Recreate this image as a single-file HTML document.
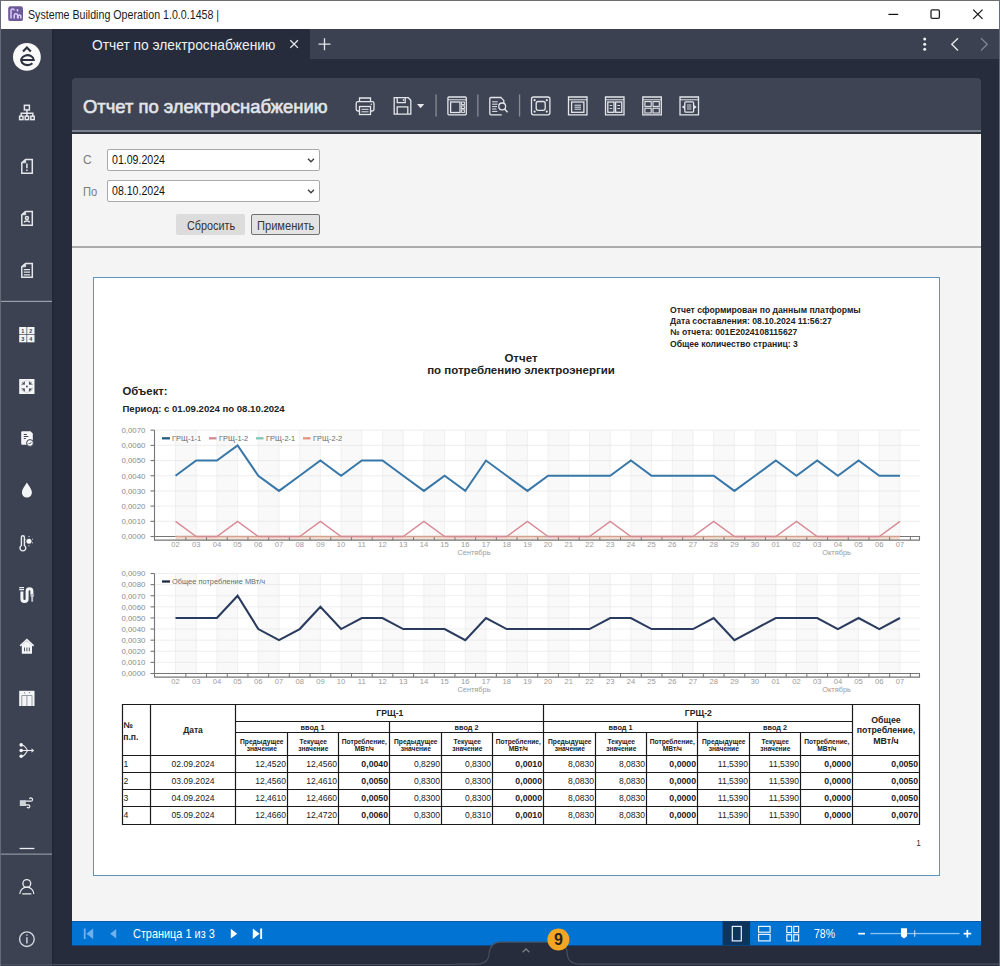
<!DOCTYPE html>
<html><head><meta charset="utf-8">
<style>
*{margin:0;padding:0;box-sizing:border-box}
html,body{width:1000px;height:966px;overflow:hidden;background:#262c3b;font-family:"Liberation Sans",sans-serif;position:relative}
.a{position:absolute;white-space:nowrap}
.sx{transform-origin:0 0}
#title{left:0;top:0;width:1000px;height:29px;background:#fff}
#side{left:1px;top:29px;width:51px;height:937px;background:#3c4252}
#tabs{left:310px;top:29px;width:689px;height:30px;background:#3b4150}
#tab{left:52px;top:29px;width:258px;height:30px;background:#262c3b}
#panel{left:72px;top:133.6px;width:909px;height:787px;background:#f4f4f4;border-right:1px solid #fff}
#tb{left:72px;top:78px;width:909px;height:52.2px;background:#3e4454;border-radius:4px 4px 0 0}
.inp{background:#fff;border:1px solid #a9a9a9;border-radius:2px;height:22px;width:213px}
#bar{left:72px;top:920.6px;width:909px;height:25.8px;background:#0073d3;border-top:0.6px solid #0a5aa8;border-bottom:0.6px solid #0a4a88}
svg{position:absolute;overflow:visible}
</style></head><body>
<div id="title" class="a"></div>
<div class="a" style="left:0;top:0;width:1000px;height:1px;background:#6e6e6e"></div>
<div class="a" style="left:0;top:0;width:1px;height:966px;background:#646a77"></div>
<div class="a" style="left:999px;top:0;width:1px;height:966px;background:#666b78"></div>
<svg style="left:0;top:0" width="30" height="29" viewBox="0 0 30 29">
  <rect x="8.2" y="6.3" width="14.8" height="14.8" rx="2.2" fill="#6d5b98"/>
  <path d="M11 18.5V10.5a1.6 1.6 0 0 1 3.2 0M17.5 11.5V9M14.2 18.5v-3a1.7 1.7 0 0 1 3.4 0v3M18.2 18.5v-2.5a1.4 1.4 0 0 1 2.6 0v2.5M11 18.5v-2.8" stroke="#d9ccff" stroke-width="1.5" fill="none"/>
</svg>
<div class="a sx" style="left:28px;top:8px;font-size:12px;color:#1c1c1c;transform:scaleX(0.888)">Systeme Building Operation 1.0.0.1458 |</div>
<svg style="left:880px;top:0" width="120" height="29" viewBox="880 0 120 29">
  <path d="M888.4 14.4h9.8" stroke="#111" stroke-width="1.2"/>
  <rect x="931" y="9.9" width="8.4" height="8.4" rx="1.3" stroke="#222" stroke-width="1.3" fill="none"/>
  <path d="M973.2 9.6l9.3 9.3M982.5 9.6l-9.3 9.3" stroke="#111" stroke-width="1.2"/>
</svg>

<div id="side" class="a"></div>
<div id="tab" class="a"></div>
<div class="a" style="left:52px;top:29px;width:2px;height:937px;background:#22273a"></div>
<div id="tabs" class="a"></div>
<div class="a sx" style="left:92px;top:37px;font-size:14px;color:#eef0f3;transform:scaleX(0.985)">Отчет по электроснабжению</div>
<svg style="left:280px;top:29px" width="60" height="30" viewBox="280 29 60 30">
  <path d="M290.3 40.3l7.6 7.6M297.9 40.3l-7.6 7.6" stroke="#e6e8ec" stroke-width="1.3"/>
  <path d="M324.5 38.2v12M318.5 44.2h12" stroke="#e6e8ec" stroke-width="1.3"/>
</svg>
<svg style="left:910px;top:29px" width="90" height="30" viewBox="910 29 90 30">
  <circle cx="924.7" cy="39" r="1.5" fill="#eef0f3"/><circle cx="924.7" cy="44.2" r="1.5" fill="#eef0f3"/><circle cx="924.7" cy="49.3" r="1.5" fill="#eef0f3"/>
  <path d="M958 38.2l-6.2 6.1 6.2 6.1" stroke="#e6e8ec" stroke-width="1.4" fill="none"/>
  <path d="M981 38.2l6.2 6.1-6.2 6.1" stroke="#7d8391" stroke-width="1.4" fill="none"/>
</svg>

<svg style="left:0;top:0" width="52" height="966" viewBox="0 0 52 966">
  <circle cx="26.9" cy="56.9" r="13.9" fill="#fafafa"/>
  <path d="M20.2 60H33.8A6.3 5 0 1 0 32.4 63.3" stroke="#2c313d" stroke-width="2.1" fill="none"/>
  <path d="M23 51.6L26.9 47.6 30.8 51.6" stroke="#2c313d" stroke-width="2.2" fill="none"/>
  <g stroke="#e4e6ea" fill="none" stroke-width="1.5">
    <!-- org chart -->
    <rect x="24.4" y="105.3" width="5" height="4.6" fill="#3c4252"/>
    <path d="M26.9 110v3.2M21.2 116v-2.8H32.8V116M26.9 113.2V116"/>
    <rect x="19.6" y="116.2" width="3.4" height="3.4"/><rect x="25.2" y="116.2" width="3.4" height="3.4"/><rect x="30.8" y="116.2" width="3.4" height="3.4"/>
    <!-- doc ! -->
    <path d="M21.8 162.8L25.6 159.4H32.3V173.3H21.8Z"/><path d="M21.8 162.8L25.6 159.4V162.8Z" fill="#e4e6ea" stroke-width="0.8"/>
    <path d="M26.9 163.6v4.6M26.9 169.6v1.4"/>
    <!-- doc person -->
    <path d="M21.8 214.8L25.6 211.4H32.3V225.3H21.8Z"/><path d="M21.8 214.8L25.6 211.4V214.8Z" fill="#e4e6ea" stroke-width="0.8"/>
    <circle cx="26.9" cy="218" r="1.5"/><path d="M24.4 222.6c0-2 5-2 5 0"/>
    <!-- doc lines -->
    <path d="M21.8 266.8L25.6 263.4H32.3V277.3H21.8Z"/><path d="M21.8 266.8L25.6 263.4V266.8Z" fill="#e4e6ea" stroke-width="0.8"/>
    <path d="M23.8 269.6h6.2M23.8 272.2h6.2M23.8 274.8h6.2" stroke-width="1.2"/>
  </g>
  <rect x="1" y="300.8" width="51" height="1.2" fill="#9aa0ac"/>
  <g fill="#f4f5f7">
    <!-- grid 1234 -->
    <rect x="19.2" y="327" width="7.3" height="7.3"/><rect x="27.2" y="327" width="7.3" height="7.3"/>
    <rect x="19.2" y="335" width="7.3" height="7.3"/><rect x="27.2" y="335" width="7.3" height="7.3"/>
    <text x="22.9" y="333.2" font-size="5.5" font-weight="bold" fill="#3c4252" text-anchor="middle">1</text>
    <text x="30.9" y="333.2" font-size="5.5" font-weight="bold" fill="#3c4252" text-anchor="middle">2</text>
    <text x="22.9" y="341.2" font-size="5.5" font-weight="bold" fill="#3c4252" text-anchor="middle">3</text>
    <text x="30.9" y="341.2" font-size="5.5" font-weight="bold" fill="#3c4252" text-anchor="middle">4</text>
    <!-- fan -->
    <rect x="19.2" y="379" width="15.3" height="15" />
    <circle cx="26.9" cy="386.5" r="5.9" fill="#3c4252"/>
    <circle cx="26.9" cy="386.5" r="5.5" fill="none" stroke="#f4f5f7" stroke-width="0.7"/>
    <ellipse cx="26.9" cy="383.4" rx="2.1" ry="3.1" /><ellipse cx="26.9" cy="389.6" rx="2.1" ry="3.1"/>
    <ellipse cx="23.8" cy="386.5" rx="3.1" ry="2.1" /><ellipse cx="30" cy="386.5" rx="3.1" ry="2.1"/>
    <circle cx="26.9" cy="386.5" r="0.9" fill="#3c4252"/>
    <!-- doc check -->
    <path d="M22.2 431.2H30.5L32.8 433.5V444.8H22.2A1 1 0 0 1 21.2 443.8V432.2A1 1 0 0 1 22.2 431.2Z"/>
    <path d="M23.8 434.5h3M23.8 436.5h4.5M23.8 438.5h2" stroke="#3c4252" stroke-width="1"/>
    <circle cx="30" cy="443" r="3.4" stroke="#3c4252" stroke-width="1"/>
    <path d="M28.6 443l1 1 1.8-1.8" stroke="#3c4252" stroke-width="0.9" fill="none"/>
    <!-- drop -->
    <path d="M26.9 482.6C25 486 21.9 489.5 21.9 492.6A5 5 0 0 0 31.9 492.6C31.9 489.5 28.8 486 26.9 482.6Z"/>
    <!-- house -->
    <path d="M20.2 645.8L26.9 639.5 33.6 645.8" stroke="#f4f5f7" stroke-width="1.6" fill="none"/>
    <path d="M21.8 645.2L26.9 640.8 32 645.2V653.8H21.8Z"/>
    <path d="M24.5 647.5v3.8M26.9 647.5v3.8M29.3 647.5v3.8" stroke="#3c4252" stroke-width="0.9"/>
    <!-- elevator -->
    <rect x="19.2" y="690.8" width="15.3" height="15.2"/>
    <path d="M21.8 706V695.5H32V706M26.9 695.5V706" stroke="#8e929a" stroke-width="0.9" fill="none"/>
    <path d="M23.8 693.2l0.8-1 0.8 1ZM28.8 692.2l0.8 1 0.8-1Z" fill="#3c4252"/>
  </g>
  <g stroke="#eceef1" fill="none" stroke-width="1.4">
    <!-- thermometer sun -->
    <path d="M21.4 545.5V537.2A1.5 1.5 0 0 1 24.4 537.2V545.5A2.9 2.9 0 1 1 21.4 545.5Z"/>
    <circle cx="29" cy="541.2" r="2.5" fill="#f4f5f7" stroke="none"/>
    <path d="M29 536.2v1M29 545.3v1M25.5 539.5l.8.5M32 542.5l.8.5M32 539.5l.8-.5M25.7 542.5l.6-.4" stroke-width="1"/>
    <!-- pipe -->
    <path d="M19.2 587.6h4.8M19.2 589.6h4.8" stroke-width="1.2"/>
    <path d="M21.9 591.4V599A2.6 2.6 0 0 0 27.1 599V591.2A2.4 2.4 0 0 1 31.9 591.2V594.6" stroke-width="3" stroke="#f4f5f7"/>
    <path d="M30 594.6h4.4l-1.3 2.8v4.4h-1.8v-4.4z" fill="#c4c8d0" stroke="none"/>
    <!-- split -->
    <circle cx="21.2" cy="744.9" r="1.8" fill="#f4f5f7" stroke="none"/>
    <circle cx="21.2" cy="750.5" r="1.8" fill="#f4f5f7" stroke="none"/>
    <circle cx="21.2" cy="756.3" r="1.8" fill="#f4f5f7" stroke="none"/>
    <path d="M22 745C25 745.5 26.5 748.5 27.5 750.5 26.5 752.5 25 755.5 22 756.3M22 750.5H32" stroke-width="1.1"/>
    <path d="M31.5 748.2L34.3 750.5 31.5 752.8Z" fill="#dfe1e5" stroke="none"/>
    <!-- wind -->
    <rect x="19.8" y="800.2" width="6" height="5.8" fill="#cfd3da" stroke="none"/>
    <path d="M25.5 801.2H31A1.6 1.6 0 1 0 29.5 799M25 804.8H28.5A1.5 1.5 0 1 1 27 807" stroke-width="1.2"/>
    <path d="M19.6 848.5H34.4" stroke-width="1.3"/>
    <!-- user -->
    <circle cx="26.8" cy="883.5" r="3.9" stroke-width="1.3"/>
    <path d="M19.9 894A6.9 6.9 0 0 1 33.7 894M22.2 893.8H31.4" stroke-width="1.3"/>
    <!-- info -->
    <circle cx="26.9" cy="939.2" r="7.3" stroke="#d4d8e0" stroke-width="1.4"/>
    <path d="M26.9 937.2V943.6M26.9 934.6V935.8" stroke="#d4d8e0" stroke-width="1.4"/>
  </g>
  <rect x="1" y="853.5" width="51" height="1.3" fill="#8a909c"/>
</svg>
<div id="panel" class="a"></div>
<div id="tb" class="a"></div>
<div class="a sx" style="left:83px;top:96px;font-size:18.4px;color:#e2e5ea;letter-spacing:0px;-webkit-text-stroke:0.6px #e2e5ea">Отчет по электроснабжению</div>
<svg style="left:340px;top:85px" width="370" height="40" viewBox="340 85 370 40">
 <g stroke="#e4e6ea" stroke-width="1.3" fill="none">
  <path d="M359.5 101.5V98H370.5V101.5"/>
  <rect x="356.2" y="101.6" width="17.8" height="9.4" rx="1.8"/>
  <rect x="359.5" y="106.5" width="11" height="8" fill="#3e4454"/>
  <path d="M361.5 109.3h7M361.5 111.8h7" stroke-width="1"/>
  <path d="M394.2 97.7H408.3L410.8 100.2V114.2H394.2Z"/>
  <path d="M397.2 97.9V102.6H405.2V97.9"/>
  <path d="M397.2 114V106.8H407.8V114"/>
  <path d="M403.4 99v2" stroke-width="1"/>
  <rect x="447.9" y="97" width="18.4" height="17.8" rx="1"/>
  <path d="M448 99.8H466.2" stroke-width="1"/>
  <rect x="450.6" y="102" width="9.4" height="10.5"/>
  <rect x="461.6" y="102" width="2.8" height="2.6" stroke-width="1"/>
  <rect x="461.6" y="105.9" width="2.8" height="2.6" stroke-width="1"/>
  <rect x="461.6" y="109.8" width="2.8" height="2.6" stroke-width="1"/>
  <path d="M501.5 97.5H490.8A1 1 0 0 0 489.8 98.5V113.8A1 1 0 0 0 490.8 114.8H501.8"/>
  <path d="M501 97.6L503.8 100.4V103"/>
  <path d="M492.2 101.8h5.5M492.2 104.2h5.5M492.2 106.6h4.8M492.2 109h4.2M492.2 111.4h5.2" stroke-width="1"/>
  <circle cx="502.2" cy="106.4" r="3.4"/>
  <path d="M504.6 109l3 3.2" stroke-width="1.5"/>
  <rect x="531.5" y="97" width="18.4" height="17.8" rx="2"/>
  <rect x="536.2" y="101.5" width="9" height="8.8" rx="2"/>
  <path d="M568.5 97H587V114.8H568.5Z"/><path d="M568.5 99.8H587" stroke-width="1"/>
  <rect x="571.6" y="102" width="12.3" height="10.3"/>
  <path d="M574.5 105.2h6.5M574.5 107.2h6.5M574.5 109.2h6.5" stroke-width="1"/>
  <path d="M605.5 97H624V114.8H605.5Z"/><path d="M605.5 99.8H624" stroke-width="1"/>
  <rect x="607.8" y="102" width="6.2" height="10.3"/><rect x="615.6" y="102" width="6.2" height="10.3"/>
  <path d="M609.6 105.5h2.6M609.6 108.5h2.6M617.4 105.5h2.6M617.4 108.5h2.6" stroke-width="0.9"/>
  <path d="M642.8 97H661.3V114.8H642.8Z"/><path d="M642.8 99.8H661.3" stroke-width="1"/>
  <rect x="644.9" y="101.6" width="6.3" height="4.8" stroke-width="1.1"/><rect x="653" y="101.6" width="6.3" height="4.8" stroke-width="1.1"/>
  <rect x="644.9" y="108.2" width="6.3" height="4.8" stroke-width="1.1"/><rect x="653" y="108.2" width="6.3" height="4.8" stroke-width="1.1"/>
  <path d="M680 97H698.5V114.8H680Z"/><path d="M680 99.8H698.5" stroke-width="1"/>
  <rect x="684.8" y="101.8" width="8.8" height="10.4" rx="1"/>
  <path d="M687 105h4.4M687 107h4.4M687 109h4.4" stroke-width="0.9"/>
 </g>
 <g fill="#e4e6ea">
  <path d="M417 104H424.2L420.6 108.2Z"/>
  <rect x="435.4" y="94.5" width="1.3" height="22" fill="#868c96"/>
  <rect x="477.2" y="94.5" width="1.3" height="22" fill="#868c96"/>
  <rect x="518.9" y="94.5" width="1.3" height="22" fill="#868c96"/>
  <circle cx="371.3" cy="104.2" r="0.8"/>
  <circle cx="534.6" cy="100.2" r="1.1"/><circle cx="546.8" cy="100.2" r="1.1"/>
  <circle cx="534.6" cy="111.6" r="1.1"/><circle cx="546.8" cy="111.6" r="1.1"/>
  <path d="M681.8 107L684.5 105V109ZM696.7 107L694 105V109Z"/>
 </g>
</svg>

<div class="a" style="left:72px;top:130.2px;width:909px;height:1.4px;background:#7b818d"></div><div class="a" style="left:72px;top:131.6px;width:909px;height:2px;background:#2f3441"></div>
<div class="a" style="left:83px;top:153px;font-size:12px;color:#7c7c7c">С</div>
<div class="a sx" style="left:83px;top:185px;font-size:12px;color:#7c7c7c;transform:scaleX(0.93)">По</div>
<div class="a inp" style="left:107px;top:149px;height:21.5px"></div>
<div class="a inp" style="left:107px;top:180.4px;height:21.7px"></div>
<div class="a sx" style="left:111.5px;top:152.5px;font-size:12.3px;color:#111;transform:scaleX(0.86)">01.09.2024</div>
<div class="a sx" style="left:111.5px;top:184px;font-size:12.3px;color:#111;transform:scaleX(0.86)">08.10.2024</div>
<svg style="left:300px;top:150px" width="20" height="60" viewBox="300 150 20 60">
  <path d="M308 158.8l3 3 3-3M308 189.8l3 3 3-3" stroke="#3a3a3a" stroke-width="1.3" fill="none"/>
</svg>
<div class="a" style="left:175.5px;top:213.8px;width:69.3px;height:21px;background:#dcdcdc;border-radius:2px"></div>
<div class="a" style="left:251.2px;top:214px;width:68.5px;height:20.5px;background:#e3e3e3;border:1.7px solid #727272;border-radius:2px"></div>
<div class="a sx" style="left:187px;top:218.5px;font-size:12px;color:#333;transform:scaleX(0.9)">Сбросить</div>
<div class="a sx" style="left:256.6px;top:218.5px;font-size:12px;color:#333;transform:scaleX(0.925)">Применить</div>
<div class="a" style="left:72px;top:245.5px;width:909px;height:2.5px;background:#ababab"></div>

<div id="bar" class="a"></div>
<svg style="left:72px;top:920px" width="910" height="27" viewBox="72 920 910 27">
  <g fill="#6fb0ee">
    <rect x="83.8" y="928.5" width="1.8" height="10.5"/>
    <path d="M93.2 928.5V939L86.4 933.7Z"/>
    <path d="M116.2 929V938.5L110.2 933.7Z"/>
  </g>
  <g fill="#ffffff">
    <path d="M230.8 928.8V938.6L237.2 933.7Z"/>
    <path d="M252.8 928.5V939L259.6 933.7Z"/>
    <rect x="260.2" y="928.5" width="1.9" height="10.5"/>
  </g>
  <rect x="722.6" y="921.2" width="27.5" height="24" fill="#0e3460"/>
  <g stroke="#e8f2fc" stroke-width="1.2" fill="none">
    <rect x="732.3" y="926.4" width="9" height="14.5"/>
    <rect x="758.6" y="926.4" width="11.5" height="5.8"/><rect x="758.6" y="934.4" width="11.5" height="6.5"/>
    <rect x="786.8" y="926.4" width="4.8" height="6.2"/><rect x="793.8" y="926.4" width="4.8" height="6.2"/>
    <rect x="786.8" y="934.7" width="4.8" height="6.2"/><rect x="793.8" y="934.7" width="4.8" height="6.2"/>
  </g>
  <g fill="#ffffff">
    <rect x="858.2" y="932.8" width="6.8" height="1.7"/>
    <rect x="963.6" y="932.8" width="7.6" height="1.7"/><rect x="966.5" y="929.9" width="1.7" height="7.6"/>
  </g>
  <rect x="870.4" y="932.9" width="89.2" height="1.3" fill="#8cc4f2"/>
  <rect x="914.2" y="930.3" width="1" height="6.5" fill="#cfe6fa"/>
  <path d="M901 928.2H907V936.2L904 938.4 901 936.2Z" fill="#ffffff"/>
</svg>
<div class="a sx" style="left:133px;top:927px;font-size:12.2px;color:#fff;transform:scaleX(0.895)">Страница 1 из 3</div>
<div class="a sx" style="left:813.6px;top:927px;font-size:12.2px;color:#fff;transform:scaleX(0.86)">78%</div>
<svg style="left:460px;top:925px" width="130" height="41" viewBox="460 925 130 41">
  <path d="M455 964.2H476Q488.5 964.2 489.2 953.5Q490 942.2 501 942.2H558Q566.5 942.2 567.2 953.5Q568 964.2 580 964.2H999" stroke="#46505f" stroke-width="1.2" fill="#262c3b"/>
  <path d="M522.6 952.2l3.4-3.2 3.4 3.2" stroke="#7a808b" stroke-width="1.3" fill="none"/>
  <circle cx="558.4" cy="939.5" r="11" fill="#f3a623"/>
  <text x="558.5" y="944.9" font-size="16" font-weight="bold" fill="#2a2320" text-anchor="middle" font-family="Liberation Sans">9</text>
</svg>
<div class="a" style="left:1px;top:964px;width:454px;height:1.2px;background:#46505f"></div>
<div class="a" style="left:93px;top:276.5px;width:847px;height:599.5px;background:#fff;border:1.3px solid #6193bd"></div>
<div class="a" style="left:670px;top:305.20px;font-size:8.65px;font-weight:bold;color:#222">Отчет сформирован по данным платформы</div>
<div class="a" style="left:670px;top:316.10px;font-size:8.65px;font-weight:bold;color:#222">Дата составления: 08.10.2024 11:56:27</div>
<div class="a" style="left:670px;top:327.00px;font-size:8.65px;font-weight:bold;color:#222">№ отчета: 001E2024108115627</div>
<div class="a" style="left:670px;top:338.60px;font-size:8.65px;font-weight:bold;color:#222">Общее количество страниц: 3</div>
<div class="a" style="left:321px;width:400px;text-align:center;top:353.4px;font-size:11.5px;font-weight:bold;color:#222;line-height:11.5px">Отчет<br>по потреблению электроэнергии</div>
<div class="a" style="left:122.5px;top:384.5px;font-size:11.3px;font-weight:bold;color:#222">Объект:</div>
<div class="a" style="left:122.5px;top:403px;font-size:9.57px;font-weight:bold;color:#222">Период: с 01.09.2024 по 08.10.2024</div>
<svg style="left:0;top:0" width="1000" height="966" viewBox="0 0 1000 966" font-family="Liberation Sans"><rect x="175.50" y="430.30" width="20.70" height="106.20" fill="#f9f9f9"/>
<rect x="216.90" y="430.30" width="20.70" height="106.20" fill="#f9f9f9"/>
<rect x="258.30" y="430.30" width="20.70" height="106.20" fill="#f9f9f9"/>
<rect x="299.70" y="430.30" width="20.70" height="106.20" fill="#f9f9f9"/>
<rect x="341.10" y="430.30" width="20.70" height="106.20" fill="#f9f9f9"/>
<rect x="382.50" y="430.30" width="20.70" height="106.20" fill="#f9f9f9"/>
<rect x="423.90" y="430.30" width="20.70" height="106.20" fill="#f9f9f9"/>
<rect x="465.30" y="430.30" width="20.70" height="106.20" fill="#f9f9f9"/>
<rect x="506.70" y="430.30" width="20.70" height="106.20" fill="#f9f9f9"/>
<rect x="548.10" y="430.30" width="20.70" height="106.20" fill="#f9f9f9"/>
<rect x="589.50" y="430.30" width="20.70" height="106.20" fill="#f9f9f9"/>
<rect x="630.90" y="430.30" width="20.70" height="106.20" fill="#f9f9f9"/>
<rect x="672.30" y="430.30" width="20.70" height="106.20" fill="#f9f9f9"/>
<rect x="713.70" y="430.30" width="20.70" height="106.20" fill="#f9f9f9"/>
<rect x="755.10" y="430.30" width="20.70" height="106.20" fill="#f9f9f9"/>
<rect x="796.50" y="430.30" width="20.70" height="106.20" fill="#f9f9f9"/>
<rect x="837.90" y="430.30" width="20.70" height="106.20" fill="#f9f9f9"/>
<rect x="879.30" y="430.30" width="20.70" height="106.20" fill="#f9f9f9"/>
<path d="M154.5 536.50H919.5" stroke="#d9d9d9" stroke-width="0.9" stroke-dasharray="1 1"/>
<path d="M150.5 536.50H154.5" stroke="#777" stroke-width="1.1"/>
<text x="145.4" y="539.30" font-size="7.8" fill="#8a8a8a" text-anchor="end">0,0000</text>
<path d="M154.5 521.31H919.5" stroke="#d9d9d9" stroke-width="0.9" stroke-dasharray="1 1"/>
<path d="M150.5 521.31H154.5" stroke="#777" stroke-width="1.1"/>
<text x="145.4" y="524.11" font-size="7.8" fill="#8a8a8a" text-anchor="end">0,0010</text>
<path d="M154.5 506.12H919.5" stroke="#d9d9d9" stroke-width="0.9" stroke-dasharray="1 1"/>
<path d="M150.5 506.12H154.5" stroke="#777" stroke-width="1.1"/>
<text x="145.4" y="508.92" font-size="7.8" fill="#8a8a8a" text-anchor="end">0,0020</text>
<path d="M154.5 490.93H919.5" stroke="#d9d9d9" stroke-width="0.9" stroke-dasharray="1 1"/>
<path d="M150.5 490.93H154.5" stroke="#777" stroke-width="1.1"/>
<text x="145.4" y="493.73" font-size="7.8" fill="#8a8a8a" text-anchor="end">0,0030</text>
<path d="M154.5 475.74H919.5" stroke="#d9d9d9" stroke-width="0.9" stroke-dasharray="1 1"/>
<path d="M150.5 475.74H154.5" stroke="#777" stroke-width="1.1"/>
<text x="145.4" y="478.54" font-size="7.8" fill="#8a8a8a" text-anchor="end">0,0040</text>
<path d="M154.5 460.55H919.5" stroke="#d9d9d9" stroke-width="0.9" stroke-dasharray="1 1"/>
<path d="M150.5 460.55H154.5" stroke="#777" stroke-width="1.1"/>
<text x="145.4" y="463.35" font-size="7.8" fill="#8a8a8a" text-anchor="end">0,0050</text>
<path d="M154.5 445.36H919.5" stroke="#d9d9d9" stroke-width="0.9" stroke-dasharray="1 1"/>
<path d="M150.5 445.36H154.5" stroke="#777" stroke-width="1.1"/>
<text x="145.4" y="448.16" font-size="7.8" fill="#8a8a8a" text-anchor="end">0,0060</text>
<path d="M154.5 430.17H919.5" stroke="#d9d9d9" stroke-width="0.9" stroke-dasharray="1 1"/>
<path d="M150.5 430.17H154.5" stroke="#777" stroke-width="1.1"/>
<text x="145.4" y="432.97" font-size="7.8" fill="#8a8a8a" text-anchor="end">0,0070</text>
<path d="M175.50 430.30V536.50" stroke="#ececec" stroke-width="0.8"/>
<path d="M196.20 430.30V536.50" stroke="#ececec" stroke-width="0.8"/>
<path d="M216.90 430.30V536.50" stroke="#ececec" stroke-width="0.8"/>
<path d="M237.60 430.30V536.50" stroke="#ececec" stroke-width="0.8"/>
<path d="M258.30 430.30V536.50" stroke="#ececec" stroke-width="0.8"/>
<path d="M279.00 430.30V536.50" stroke="#ececec" stroke-width="0.8"/>
<path d="M299.70 430.30V536.50" stroke="#ececec" stroke-width="0.8"/>
<path d="M320.40 430.30V536.50" stroke="#ececec" stroke-width="0.8"/>
<path d="M341.10 430.30V536.50" stroke="#ececec" stroke-width="0.8"/>
<path d="M361.80 430.30V536.50" stroke="#ececec" stroke-width="0.8"/>
<path d="M382.50 430.30V536.50" stroke="#ececec" stroke-width="0.8"/>
<path d="M403.20 430.30V536.50" stroke="#ececec" stroke-width="0.8"/>
<path d="M423.90 430.30V536.50" stroke="#ececec" stroke-width="0.8"/>
<path d="M444.60 430.30V536.50" stroke="#ececec" stroke-width="0.8"/>
<path d="M465.30 430.30V536.50" stroke="#ececec" stroke-width="0.8"/>
<path d="M486.00 430.30V536.50" stroke="#ececec" stroke-width="0.8"/>
<path d="M506.70 430.30V536.50" stroke="#ececec" stroke-width="0.8"/>
<path d="M527.40 430.30V536.50" stroke="#ececec" stroke-width="0.8"/>
<path d="M548.10 430.30V536.50" stroke="#ececec" stroke-width="0.8"/>
<path d="M568.80 430.30V536.50" stroke="#ececec" stroke-width="0.8"/>
<path d="M589.50 430.30V536.50" stroke="#ececec" stroke-width="0.8"/>
<path d="M610.20 430.30V536.50" stroke="#ececec" stroke-width="0.8"/>
<path d="M630.90 430.30V536.50" stroke="#ececec" stroke-width="0.8"/>
<path d="M651.60 430.30V536.50" stroke="#ececec" stroke-width="0.8"/>
<path d="M672.30 430.30V536.50" stroke="#ececec" stroke-width="0.8"/>
<path d="M693.00 430.30V536.50" stroke="#ececec" stroke-width="0.8"/>
<path d="M713.70 430.30V536.50" stroke="#ececec" stroke-width="0.8"/>
<path d="M734.40 430.30V536.50" stroke="#ececec" stroke-width="0.8"/>
<path d="M755.10 430.30V536.50" stroke="#ececec" stroke-width="0.8"/>
<path d="M775.80 430.30V536.50" stroke="#ececec" stroke-width="0.8"/>
<path d="M796.50 430.30V536.50" stroke="#ececec" stroke-width="0.8"/>
<path d="M817.20 430.30V536.50" stroke="#ececec" stroke-width="0.8"/>
<path d="M837.90 430.30V536.50" stroke="#ececec" stroke-width="0.8"/>
<path d="M858.60 430.30V536.50" stroke="#ececec" stroke-width="0.8"/>
<path d="M879.30 430.30V536.50" stroke="#ececec" stroke-width="0.8"/>
<path d="M900.00 430.30V536.50" stroke="#ececec" stroke-width="0.8"/>
<rect x="175.50" y="536.50" width="724.50" height="3.6" fill="#f2e0d6"/>
<path d="M154.5 430.30V540.10H919.5V536.50H154.5" stroke="#767676" stroke-width="1.1" fill="none"/>
<path d="M185.85 536.50V540.10" stroke="#767676" stroke-width="1"/>
<text x="175.50" y="547.20" font-size="7.6" fill="#9a9a9a" text-anchor="middle">02</text>
<path d="M206.55 536.50V540.10" stroke="#767676" stroke-width="1"/>
<text x="196.20" y="547.20" font-size="7.6" fill="#9a9a9a" text-anchor="middle">03</text>
<path d="M227.25 536.50V540.10" stroke="#767676" stroke-width="1"/>
<text x="216.90" y="547.20" font-size="7.6" fill="#9a9a9a" text-anchor="middle">04</text>
<path d="M247.95 536.50V540.10" stroke="#767676" stroke-width="1"/>
<text x="237.60" y="547.20" font-size="7.6" fill="#9a9a9a" text-anchor="middle">05</text>
<path d="M268.65 536.50V540.10" stroke="#767676" stroke-width="1"/>
<text x="258.30" y="547.20" font-size="7.6" fill="#9a9a9a" text-anchor="middle">06</text>
<path d="M289.35 536.50V540.10" stroke="#767676" stroke-width="1"/>
<text x="279.00" y="547.20" font-size="7.6" fill="#9a9a9a" text-anchor="middle">07</text>
<path d="M310.05 536.50V540.10" stroke="#767676" stroke-width="1"/>
<text x="299.70" y="547.20" font-size="7.6" fill="#9a9a9a" text-anchor="middle">08</text>
<path d="M330.75 536.50V540.10" stroke="#767676" stroke-width="1"/>
<text x="320.40" y="547.20" font-size="7.6" fill="#9a9a9a" text-anchor="middle">09</text>
<path d="M351.45 536.50V540.10" stroke="#767676" stroke-width="1"/>
<text x="341.10" y="547.20" font-size="7.6" fill="#9a9a9a" text-anchor="middle">10</text>
<path d="M372.15 536.50V540.10" stroke="#767676" stroke-width="1"/>
<text x="361.80" y="547.20" font-size="7.6" fill="#9a9a9a" text-anchor="middle">11</text>
<path d="M392.85 536.50V540.10" stroke="#767676" stroke-width="1"/>
<text x="382.50" y="547.20" font-size="7.6" fill="#9a9a9a" text-anchor="middle">12</text>
<path d="M413.55 536.50V540.10" stroke="#767676" stroke-width="1"/>
<text x="403.20" y="547.20" font-size="7.6" fill="#9a9a9a" text-anchor="middle">13</text>
<path d="M434.25 536.50V540.10" stroke="#767676" stroke-width="1"/>
<text x="423.90" y="547.20" font-size="7.6" fill="#9a9a9a" text-anchor="middle">14</text>
<path d="M454.95 536.50V540.10" stroke="#767676" stroke-width="1"/>
<text x="444.60" y="547.20" font-size="7.6" fill="#9a9a9a" text-anchor="middle">15</text>
<path d="M475.65 536.50V540.10" stroke="#767676" stroke-width="1"/>
<text x="465.30" y="547.20" font-size="7.6" fill="#9a9a9a" text-anchor="middle">16</text>
<path d="M496.35 536.50V540.10" stroke="#767676" stroke-width="1"/>
<text x="486.00" y="547.20" font-size="7.6" fill="#9a9a9a" text-anchor="middle">17</text>
<path d="M517.05 536.50V540.10" stroke="#767676" stroke-width="1"/>
<text x="506.70" y="547.20" font-size="7.6" fill="#9a9a9a" text-anchor="middle">18</text>
<path d="M537.75 536.50V540.10" stroke="#767676" stroke-width="1"/>
<text x="527.40" y="547.20" font-size="7.6" fill="#9a9a9a" text-anchor="middle">19</text>
<path d="M558.45 536.50V540.10" stroke="#767676" stroke-width="1"/>
<text x="548.10" y="547.20" font-size="7.6" fill="#9a9a9a" text-anchor="middle">20</text>
<path d="M579.15 536.50V540.10" stroke="#767676" stroke-width="1"/>
<text x="568.80" y="547.20" font-size="7.6" fill="#9a9a9a" text-anchor="middle">21</text>
<path d="M599.85 536.50V540.10" stroke="#767676" stroke-width="1"/>
<text x="589.50" y="547.20" font-size="7.6" fill="#9a9a9a" text-anchor="middle">22</text>
<path d="M620.55 536.50V540.10" stroke="#767676" stroke-width="1"/>
<text x="610.20" y="547.20" font-size="7.6" fill="#9a9a9a" text-anchor="middle">23</text>
<path d="M641.25 536.50V540.10" stroke="#767676" stroke-width="1"/>
<text x="630.90" y="547.20" font-size="7.6" fill="#9a9a9a" text-anchor="middle">24</text>
<path d="M661.95 536.50V540.10" stroke="#767676" stroke-width="1"/>
<text x="651.60" y="547.20" font-size="7.6" fill="#9a9a9a" text-anchor="middle">25</text>
<path d="M682.65 536.50V540.10" stroke="#767676" stroke-width="1"/>
<text x="672.30" y="547.20" font-size="7.6" fill="#9a9a9a" text-anchor="middle">26</text>
<path d="M703.35 536.50V540.10" stroke="#767676" stroke-width="1"/>
<text x="693.00" y="547.20" font-size="7.6" fill="#9a9a9a" text-anchor="middle">27</text>
<path d="M724.05 536.50V540.10" stroke="#767676" stroke-width="1"/>
<text x="713.70" y="547.20" font-size="7.6" fill="#9a9a9a" text-anchor="middle">28</text>
<path d="M744.75 536.50V540.10" stroke="#767676" stroke-width="1"/>
<text x="734.40" y="547.20" font-size="7.6" fill="#9a9a9a" text-anchor="middle">29</text>
<path d="M765.45 536.50V540.10" stroke="#767676" stroke-width="1"/>
<text x="755.10" y="547.20" font-size="7.6" fill="#9a9a9a" text-anchor="middle">30</text>
<path d="M786.15 536.50V540.10" stroke="#767676" stroke-width="1"/>
<text x="775.80" y="547.20" font-size="7.6" fill="#9a9a9a" text-anchor="middle">01</text>
<path d="M806.85 536.50V540.10" stroke="#767676" stroke-width="1"/>
<text x="796.50" y="547.20" font-size="7.6" fill="#9a9a9a" text-anchor="middle">02</text>
<path d="M827.55 536.50V540.10" stroke="#767676" stroke-width="1"/>
<text x="817.20" y="547.20" font-size="7.6" fill="#9a9a9a" text-anchor="middle">03</text>
<path d="M848.25 536.50V540.10" stroke="#767676" stroke-width="1"/>
<text x="837.90" y="547.20" font-size="7.6" fill="#9a9a9a" text-anchor="middle">04</text>
<path d="M868.95 536.50V540.10" stroke="#767676" stroke-width="1"/>
<text x="858.60" y="547.20" font-size="7.6" fill="#9a9a9a" text-anchor="middle">05</text>
<path d="M889.65 536.50V540.10" stroke="#767676" stroke-width="1"/>
<text x="879.30" y="547.20" font-size="7.6" fill="#9a9a9a" text-anchor="middle">06</text>
<path d="M910.35 536.50V540.10" stroke="#767676" stroke-width="1"/>
<text x="900.00" y="547.20" font-size="7.6" fill="#9a9a9a" text-anchor="middle">07</text>
<text x="474" y="555.00" font-size="7.4" fill="#9a9a9a" text-anchor="middle">Сентябрь</text>
<text x="836.6" y="555.00" font-size="7.4" fill="#9a9a9a" text-anchor="middle">Октябрь</text>
<polyline points="175.50,536.50 196.20,536.50 216.90,536.50 237.60,536.50 258.30,536.50 279.00,536.50 299.70,536.50 320.40,536.50 341.10,536.50 361.80,536.50 382.50,536.50 403.20,536.50 423.90,536.50 444.60,536.50 465.30,536.50 486.00,536.50 506.70,536.50 527.40,536.50 548.10,536.50 568.80,536.50 589.50,536.50 610.20,536.50 630.90,536.50 651.60,536.50 672.30,536.50 693.00,536.50 713.70,536.50 734.40,536.50 755.10,536.50 775.80,536.50 796.50,536.50 817.20,536.50 837.90,536.50 858.60,536.50 879.30,536.50 900.00,536.50" fill="none" stroke="#8fcfbf" stroke-width="1.0" stroke-linejoin="miter"/>
<polyline points="175.50,536.50 196.20,536.50 216.90,536.50 237.60,536.50 258.30,536.50 279.00,536.50 299.70,536.50 320.40,536.50 341.10,536.50 361.80,536.50 382.50,536.50 403.20,536.50 423.90,536.50 444.60,536.50 465.30,536.50 486.00,536.50 506.70,536.50 527.40,536.50 548.10,536.50 568.80,536.50 589.50,536.50 610.20,536.50 630.90,536.50 651.60,536.50 672.30,536.50 693.00,536.50 713.70,536.50 734.40,536.50 755.10,536.50 775.80,536.50 796.50,536.50 817.20,536.50 837.90,536.50 858.60,536.50 879.30,536.50 900.00,536.50" fill="none" stroke="#d6a090" stroke-width="1.6" stroke-linejoin="miter"/>
<polyline points="175.50,521.31 196.20,536.50 216.90,536.50 237.60,521.31 258.30,536.50 279.00,536.50 299.70,536.50 320.40,521.31 341.10,536.50 361.80,536.50 382.50,536.50 403.20,536.50 423.90,521.31 444.60,536.50 465.30,536.50 486.00,536.50 506.70,536.50 527.40,521.31 548.10,536.50 568.80,536.50 589.50,536.50 610.20,521.31 630.90,536.50 651.60,536.50 672.30,536.50 693.00,536.50 713.70,521.31 734.40,536.50 755.10,536.50 775.80,536.50 796.50,521.31 817.20,536.50 837.90,536.50 858.60,536.50 879.30,536.50 900.00,521.31" fill="none" stroke="#d88a94" stroke-width="1.45" stroke-linejoin="miter"/>
<polyline points="175.50,475.74 196.20,460.55 216.90,460.55 237.60,445.36 258.30,475.74 279.00,490.93 299.70,475.74 320.40,460.55 341.10,475.74 361.80,460.55 382.50,460.55 403.20,475.74 423.90,490.93 444.60,475.74 465.30,490.93 486.00,460.55 506.70,475.74 527.40,490.93 548.10,475.74 568.80,475.74 589.50,475.74 610.20,475.74 630.90,460.55 651.60,475.74 672.30,475.74 693.00,475.74 713.70,475.74 734.40,490.93 755.10,475.74 775.80,460.55 796.50,475.74 817.20,460.55 837.90,475.74 858.60,460.55 879.30,475.74 900.00,475.74" fill="none" stroke="#3877a8" stroke-width="2.0" stroke-linejoin="miter"/>
<path d="M162 438.30H170" stroke="#1f5f82" stroke-width="2.3"/>
<text x="172" y="440.90" font-size="7.45" fill="#6a6a6a">ГРЩ-1-1</text>
<path d="M209 438.30H216.5" stroke="#d08a90" stroke-width="2.3"/>
<text x="219" y="440.90" font-size="7.45" fill="#6a6a6a">ГРЩ-1-2</text>
<path d="M256 438.30H263.5" stroke="#80c6b4" stroke-width="2.3"/>
<text x="266" y="440.90" font-size="7.45" fill="#6a6a6a">ГРЩ-2-1</text>
<path d="M303 438.30H310.5" stroke="#e3957e" stroke-width="2.3"/>
<text x="313" y="440.90" font-size="7.45" fill="#6a6a6a">ГРЩ-2-2</text>
<rect x="175.50" y="573.50" width="20.70" height="100.00" fill="#f9f9f9"/>
<rect x="216.90" y="573.50" width="20.70" height="100.00" fill="#f9f9f9"/>
<rect x="258.30" y="573.50" width="20.70" height="100.00" fill="#f9f9f9"/>
<rect x="299.70" y="573.50" width="20.70" height="100.00" fill="#f9f9f9"/>
<rect x="341.10" y="573.50" width="20.70" height="100.00" fill="#f9f9f9"/>
<rect x="382.50" y="573.50" width="20.70" height="100.00" fill="#f9f9f9"/>
<rect x="423.90" y="573.50" width="20.70" height="100.00" fill="#f9f9f9"/>
<rect x="465.30" y="573.50" width="20.70" height="100.00" fill="#f9f9f9"/>
<rect x="506.70" y="573.50" width="20.70" height="100.00" fill="#f9f9f9"/>
<rect x="548.10" y="573.50" width="20.70" height="100.00" fill="#f9f9f9"/>
<rect x="589.50" y="573.50" width="20.70" height="100.00" fill="#f9f9f9"/>
<rect x="630.90" y="573.50" width="20.70" height="100.00" fill="#f9f9f9"/>
<rect x="672.30" y="573.50" width="20.70" height="100.00" fill="#f9f9f9"/>
<rect x="713.70" y="573.50" width="20.70" height="100.00" fill="#f9f9f9"/>
<rect x="755.10" y="573.50" width="20.70" height="100.00" fill="#f9f9f9"/>
<rect x="796.50" y="573.50" width="20.70" height="100.00" fill="#f9f9f9"/>
<rect x="837.90" y="573.50" width="20.70" height="100.00" fill="#f9f9f9"/>
<rect x="879.30" y="573.50" width="20.70" height="100.00" fill="#f9f9f9"/>
<path d="M154.5 673.50H919.5" stroke="#d9d9d9" stroke-width="0.9" stroke-dasharray="1 1"/>
<path d="M150.5 673.50H154.5" stroke="#777" stroke-width="1.1"/>
<text x="145.4" y="676.30" font-size="7.8" fill="#8a8a8a" text-anchor="end">0,0000</text>
<path d="M154.5 662.39H919.5" stroke="#d9d9d9" stroke-width="0.9" stroke-dasharray="1 1"/>
<path d="M150.5 662.39H154.5" stroke="#777" stroke-width="1.1"/>
<text x="145.4" y="665.19" font-size="7.8" fill="#8a8a8a" text-anchor="end">0,0010</text>
<path d="M154.5 651.28H919.5" stroke="#d9d9d9" stroke-width="0.9" stroke-dasharray="1 1"/>
<path d="M150.5 651.28H154.5" stroke="#777" stroke-width="1.1"/>
<text x="145.4" y="654.08" font-size="7.8" fill="#8a8a8a" text-anchor="end">0,0020</text>
<path d="M154.5 640.17H919.5" stroke="#d9d9d9" stroke-width="0.9" stroke-dasharray="1 1"/>
<path d="M150.5 640.17H154.5" stroke="#777" stroke-width="1.1"/>
<text x="145.4" y="642.97" font-size="7.8" fill="#8a8a8a" text-anchor="end">0,0030</text>
<path d="M154.5 629.06H919.5" stroke="#d9d9d9" stroke-width="0.9" stroke-dasharray="1 1"/>
<path d="M150.5 629.06H154.5" stroke="#777" stroke-width="1.1"/>
<text x="145.4" y="631.86" font-size="7.8" fill="#8a8a8a" text-anchor="end">0,0040</text>
<path d="M154.5 617.95H919.5" stroke="#d9d9d9" stroke-width="0.9" stroke-dasharray="1 1"/>
<path d="M150.5 617.95H154.5" stroke="#777" stroke-width="1.1"/>
<text x="145.4" y="620.75" font-size="7.8" fill="#8a8a8a" text-anchor="end">0,0050</text>
<path d="M154.5 606.84H919.5" stroke="#d9d9d9" stroke-width="0.9" stroke-dasharray="1 1"/>
<path d="M150.5 606.84H154.5" stroke="#777" stroke-width="1.1"/>
<text x="145.4" y="609.64" font-size="7.8" fill="#8a8a8a" text-anchor="end">0,0060</text>
<path d="M154.5 595.73H919.5" stroke="#d9d9d9" stroke-width="0.9" stroke-dasharray="1 1"/>
<path d="M150.5 595.73H154.5" stroke="#777" stroke-width="1.1"/>
<text x="145.4" y="598.53" font-size="7.8" fill="#8a8a8a" text-anchor="end">0,0070</text>
<path d="M154.5 584.62H919.5" stroke="#d9d9d9" stroke-width="0.9" stroke-dasharray="1 1"/>
<path d="M150.5 584.62H154.5" stroke="#777" stroke-width="1.1"/>
<text x="145.4" y="587.42" font-size="7.8" fill="#8a8a8a" text-anchor="end">0,0080</text>
<path d="M154.5 573.51H919.5" stroke="#d9d9d9" stroke-width="0.9" stroke-dasharray="1 1"/>
<path d="M150.5 573.51H154.5" stroke="#777" stroke-width="1.1"/>
<text x="145.4" y="576.31" font-size="7.8" fill="#8a8a8a" text-anchor="end">0,0090</text>
<path d="M175.50 573.50V673.50" stroke="#ececec" stroke-width="0.8"/>
<path d="M196.20 573.50V673.50" stroke="#ececec" stroke-width="0.8"/>
<path d="M216.90 573.50V673.50" stroke="#ececec" stroke-width="0.8"/>
<path d="M237.60 573.50V673.50" stroke="#ececec" stroke-width="0.8"/>
<path d="M258.30 573.50V673.50" stroke="#ececec" stroke-width="0.8"/>
<path d="M279.00 573.50V673.50" stroke="#ececec" stroke-width="0.8"/>
<path d="M299.70 573.50V673.50" stroke="#ececec" stroke-width="0.8"/>
<path d="M320.40 573.50V673.50" stroke="#ececec" stroke-width="0.8"/>
<path d="M341.10 573.50V673.50" stroke="#ececec" stroke-width="0.8"/>
<path d="M361.80 573.50V673.50" stroke="#ececec" stroke-width="0.8"/>
<path d="M382.50 573.50V673.50" stroke="#ececec" stroke-width="0.8"/>
<path d="M403.20 573.50V673.50" stroke="#ececec" stroke-width="0.8"/>
<path d="M423.90 573.50V673.50" stroke="#ececec" stroke-width="0.8"/>
<path d="M444.60 573.50V673.50" stroke="#ececec" stroke-width="0.8"/>
<path d="M465.30 573.50V673.50" stroke="#ececec" stroke-width="0.8"/>
<path d="M486.00 573.50V673.50" stroke="#ececec" stroke-width="0.8"/>
<path d="M506.70 573.50V673.50" stroke="#ececec" stroke-width="0.8"/>
<path d="M527.40 573.50V673.50" stroke="#ececec" stroke-width="0.8"/>
<path d="M548.10 573.50V673.50" stroke="#ececec" stroke-width="0.8"/>
<path d="M568.80 573.50V673.50" stroke="#ececec" stroke-width="0.8"/>
<path d="M589.50 573.50V673.50" stroke="#ececec" stroke-width="0.8"/>
<path d="M610.20 573.50V673.50" stroke="#ececec" stroke-width="0.8"/>
<path d="M630.90 573.50V673.50" stroke="#ececec" stroke-width="0.8"/>
<path d="M651.60 573.50V673.50" stroke="#ececec" stroke-width="0.8"/>
<path d="M672.30 573.50V673.50" stroke="#ececec" stroke-width="0.8"/>
<path d="M693.00 573.50V673.50" stroke="#ececec" stroke-width="0.8"/>
<path d="M713.70 573.50V673.50" stroke="#ececec" stroke-width="0.8"/>
<path d="M734.40 573.50V673.50" stroke="#ececec" stroke-width="0.8"/>
<path d="M755.10 573.50V673.50" stroke="#ececec" stroke-width="0.8"/>
<path d="M775.80 573.50V673.50" stroke="#ececec" stroke-width="0.8"/>
<path d="M796.50 573.50V673.50" stroke="#ececec" stroke-width="0.8"/>
<path d="M817.20 573.50V673.50" stroke="#ececec" stroke-width="0.8"/>
<path d="M837.90 573.50V673.50" stroke="#ececec" stroke-width="0.8"/>
<path d="M858.60 573.50V673.50" stroke="#ececec" stroke-width="0.8"/>
<path d="M879.30 573.50V673.50" stroke="#ececec" stroke-width="0.8"/>
<path d="M900.00 573.50V673.50" stroke="#ececec" stroke-width="0.8"/>
<path d="M154.5 573.50V677.10H919.5V673.50H154.5" stroke="#767676" stroke-width="1.1" fill="none"/>
<path d="M185.85 673.50V677.10" stroke="#767676" stroke-width="1"/>
<text x="175.50" y="683.80" font-size="7.6" fill="#9a9a9a" text-anchor="middle">02</text>
<path d="M206.55 673.50V677.10" stroke="#767676" stroke-width="1"/>
<text x="196.20" y="683.80" font-size="7.6" fill="#9a9a9a" text-anchor="middle">03</text>
<path d="M227.25 673.50V677.10" stroke="#767676" stroke-width="1"/>
<text x="216.90" y="683.80" font-size="7.6" fill="#9a9a9a" text-anchor="middle">04</text>
<path d="M247.95 673.50V677.10" stroke="#767676" stroke-width="1"/>
<text x="237.60" y="683.80" font-size="7.6" fill="#9a9a9a" text-anchor="middle">05</text>
<path d="M268.65 673.50V677.10" stroke="#767676" stroke-width="1"/>
<text x="258.30" y="683.80" font-size="7.6" fill="#9a9a9a" text-anchor="middle">06</text>
<path d="M289.35 673.50V677.10" stroke="#767676" stroke-width="1"/>
<text x="279.00" y="683.80" font-size="7.6" fill="#9a9a9a" text-anchor="middle">07</text>
<path d="M310.05 673.50V677.10" stroke="#767676" stroke-width="1"/>
<text x="299.70" y="683.80" font-size="7.6" fill="#9a9a9a" text-anchor="middle">08</text>
<path d="M330.75 673.50V677.10" stroke="#767676" stroke-width="1"/>
<text x="320.40" y="683.80" font-size="7.6" fill="#9a9a9a" text-anchor="middle">09</text>
<path d="M351.45 673.50V677.10" stroke="#767676" stroke-width="1"/>
<text x="341.10" y="683.80" font-size="7.6" fill="#9a9a9a" text-anchor="middle">10</text>
<path d="M372.15 673.50V677.10" stroke="#767676" stroke-width="1"/>
<text x="361.80" y="683.80" font-size="7.6" fill="#9a9a9a" text-anchor="middle">11</text>
<path d="M392.85 673.50V677.10" stroke="#767676" stroke-width="1"/>
<text x="382.50" y="683.80" font-size="7.6" fill="#9a9a9a" text-anchor="middle">12</text>
<path d="M413.55 673.50V677.10" stroke="#767676" stroke-width="1"/>
<text x="403.20" y="683.80" font-size="7.6" fill="#9a9a9a" text-anchor="middle">13</text>
<path d="M434.25 673.50V677.10" stroke="#767676" stroke-width="1"/>
<text x="423.90" y="683.80" font-size="7.6" fill="#9a9a9a" text-anchor="middle">14</text>
<path d="M454.95 673.50V677.10" stroke="#767676" stroke-width="1"/>
<text x="444.60" y="683.80" font-size="7.6" fill="#9a9a9a" text-anchor="middle">15</text>
<path d="M475.65 673.50V677.10" stroke="#767676" stroke-width="1"/>
<text x="465.30" y="683.80" font-size="7.6" fill="#9a9a9a" text-anchor="middle">16</text>
<path d="M496.35 673.50V677.10" stroke="#767676" stroke-width="1"/>
<text x="486.00" y="683.80" font-size="7.6" fill="#9a9a9a" text-anchor="middle">17</text>
<path d="M517.05 673.50V677.10" stroke="#767676" stroke-width="1"/>
<text x="506.70" y="683.80" font-size="7.6" fill="#9a9a9a" text-anchor="middle">18</text>
<path d="M537.75 673.50V677.10" stroke="#767676" stroke-width="1"/>
<text x="527.40" y="683.80" font-size="7.6" fill="#9a9a9a" text-anchor="middle">19</text>
<path d="M558.45 673.50V677.10" stroke="#767676" stroke-width="1"/>
<text x="548.10" y="683.80" font-size="7.6" fill="#9a9a9a" text-anchor="middle">20</text>
<path d="M579.15 673.50V677.10" stroke="#767676" stroke-width="1"/>
<text x="568.80" y="683.80" font-size="7.6" fill="#9a9a9a" text-anchor="middle">21</text>
<path d="M599.85 673.50V677.10" stroke="#767676" stroke-width="1"/>
<text x="589.50" y="683.80" font-size="7.6" fill="#9a9a9a" text-anchor="middle">22</text>
<path d="M620.55 673.50V677.10" stroke="#767676" stroke-width="1"/>
<text x="610.20" y="683.80" font-size="7.6" fill="#9a9a9a" text-anchor="middle">23</text>
<path d="M641.25 673.50V677.10" stroke="#767676" stroke-width="1"/>
<text x="630.90" y="683.80" font-size="7.6" fill="#9a9a9a" text-anchor="middle">24</text>
<path d="M661.95 673.50V677.10" stroke="#767676" stroke-width="1"/>
<text x="651.60" y="683.80" font-size="7.6" fill="#9a9a9a" text-anchor="middle">25</text>
<path d="M682.65 673.50V677.10" stroke="#767676" stroke-width="1"/>
<text x="672.30" y="683.80" font-size="7.6" fill="#9a9a9a" text-anchor="middle">26</text>
<path d="M703.35 673.50V677.10" stroke="#767676" stroke-width="1"/>
<text x="693.00" y="683.80" font-size="7.6" fill="#9a9a9a" text-anchor="middle">27</text>
<path d="M724.05 673.50V677.10" stroke="#767676" stroke-width="1"/>
<text x="713.70" y="683.80" font-size="7.6" fill="#9a9a9a" text-anchor="middle">28</text>
<path d="M744.75 673.50V677.10" stroke="#767676" stroke-width="1"/>
<text x="734.40" y="683.80" font-size="7.6" fill="#9a9a9a" text-anchor="middle">29</text>
<path d="M765.45 673.50V677.10" stroke="#767676" stroke-width="1"/>
<text x="755.10" y="683.80" font-size="7.6" fill="#9a9a9a" text-anchor="middle">30</text>
<path d="M786.15 673.50V677.10" stroke="#767676" stroke-width="1"/>
<text x="775.80" y="683.80" font-size="7.6" fill="#9a9a9a" text-anchor="middle">01</text>
<path d="M806.85 673.50V677.10" stroke="#767676" stroke-width="1"/>
<text x="796.50" y="683.80" font-size="7.6" fill="#9a9a9a" text-anchor="middle">02</text>
<path d="M827.55 673.50V677.10" stroke="#767676" stroke-width="1"/>
<text x="817.20" y="683.80" font-size="7.6" fill="#9a9a9a" text-anchor="middle">03</text>
<path d="M848.25 673.50V677.10" stroke="#767676" stroke-width="1"/>
<text x="837.90" y="683.80" font-size="7.6" fill="#9a9a9a" text-anchor="middle">04</text>
<path d="M868.95 673.50V677.10" stroke="#767676" stroke-width="1"/>
<text x="858.60" y="683.80" font-size="7.6" fill="#9a9a9a" text-anchor="middle">05</text>
<path d="M889.65 673.50V677.10" stroke="#767676" stroke-width="1"/>
<text x="879.30" y="683.80" font-size="7.6" fill="#9a9a9a" text-anchor="middle">06</text>
<path d="M910.35 673.50V677.10" stroke="#767676" stroke-width="1"/>
<text x="900.00" y="683.80" font-size="7.6" fill="#9a9a9a" text-anchor="middle">07</text>
<text x="474" y="691.60" font-size="7.4" fill="#9a9a9a" text-anchor="middle">Сентябрь</text>
<text x="836.6" y="691.60" font-size="7.4" fill="#9a9a9a" text-anchor="middle">Октябрь</text>
<polyline points="175.50,617.95 196.20,617.95 216.90,617.95 237.60,595.73 258.30,629.06 279.00,640.17 299.70,629.06 320.40,606.84 341.10,629.06 361.80,617.95 382.50,617.95 403.20,629.06 423.90,629.06 444.60,629.06 465.30,640.17 486.00,617.95 506.70,629.06 527.40,629.06 548.10,629.06 568.80,629.06 589.50,629.06 610.20,617.95 630.90,617.95 651.60,629.06 672.30,629.06 693.00,629.06 713.70,617.95 734.40,640.17 755.10,629.06 775.80,617.95 796.50,617.95 817.20,617.95 837.90,629.06 858.60,617.95 879.30,629.06 900.00,617.95" fill="none" stroke="#2b3b5e" stroke-width="2.1" stroke-linejoin="miter"/>
<path d="M162 581.50H170" stroke="#1c2a48" stroke-width="2.3"/>
<text x="172" y="584.10" font-size="7.45" fill="#6a6a6a">Общее потребление МВт/ч</text>
<path d="M122.5 704.5H919.5V824.5H122.5Z" stroke="#1a1a1a" stroke-width="1.2" fill="none"/>
<path d="M122.5 755.5H919.5" stroke="#1a1a1a" stroke-width="1.2" fill="none"/>
<path d="M122.5 772.5H919.5" stroke="#1a1a1a" stroke-width="1.2" fill="none"/>
<path d="M122.5 789.5H919.5" stroke="#1a1a1a" stroke-width="1.2" fill="none"/>
<path d="M122.5 806.5H919.5" stroke="#1a1a1a" stroke-width="1.2" fill="none"/>
<path d="M150.5 704.5V824.5" stroke="#1a1a1a" stroke-width="1.2" fill="none"/>
<path d="M235.5 704.5V824.5" stroke="#1a1a1a" stroke-width="1.2" fill="none"/>
<path d="M543.5 704.5V824.5" stroke="#1a1a1a" stroke-width="1.2" fill="none"/>
<path d="M852.5 704.5V824.5" stroke="#1a1a1a" stroke-width="1.2" fill="none"/>
<path d="M235.5 721.5H852.5" stroke="#1a1a1a" stroke-width="1.2" fill="none"/>
<path d="M235.5 732.5H852.5" stroke="#1a1a1a" stroke-width="1.2" fill="none"/>
<path d="M389.5 721.5V824.5" stroke="#1a1a1a" stroke-width="1.2" fill="none"/>
<path d="M697.5 721.5V824.5" stroke="#1a1a1a" stroke-width="1.2" fill="none"/>
<path d="M287.5 732.5V824.5" stroke="#1a1a1a" stroke-width="1.2" fill="none"/>
<path d="M338.5 732.5V824.5" stroke="#1a1a1a" stroke-width="1.2" fill="none"/>
<path d="M441.5 732.5V824.5" stroke="#1a1a1a" stroke-width="1.2" fill="none"/>
<path d="M492.5 732.5V824.5" stroke="#1a1a1a" stroke-width="1.2" fill="none"/>
<path d="M595.5 732.5V824.5" stroke="#1a1a1a" stroke-width="1.2" fill="none"/>
<path d="M646.5 732.5V824.5" stroke="#1a1a1a" stroke-width="1.2" fill="none"/>
<path d="M749.5 732.5V824.5" stroke="#1a1a1a" stroke-width="1.2" fill="none"/>
<path d="M800.5 732.5V824.5" stroke="#1a1a1a" stroke-width="1.2" fill="none"/>
<text x="123.20" y="728.20" font-size="8.6" font-weight="bold" fill="#222" text-anchor="start">№</text>
<text x="123.20" y="739.60" font-size="8.6" font-weight="bold" fill="#222" text-anchor="start">п.п.</text>
<text x="193.00" y="732.80" font-size="8.5" font-weight="bold" fill="#222" text-anchor="middle">Дата</text>
<text x="389.80" y="716.00" font-size="8.6" font-weight="bold" fill="#222" text-anchor="middle">ГРЩ-1</text>
<text x="698.30" y="716.00" font-size="8.6" font-weight="bold" fill="#222" text-anchor="middle">ГРЩ-2</text>
<text x="312.50" y="729.90" font-size="7.3" font-weight="bold" fill="#222" text-anchor="middle">ввод 1</text>
<text x="466.50" y="729.90" font-size="7.3" font-weight="bold" fill="#222" text-anchor="middle">ввод 2</text>
<text x="620.50" y="729.90" font-size="7.3" font-weight="bold" fill="#222" text-anchor="middle">ввод 1</text>
<text x="775.00" y="729.90" font-size="7.3" font-weight="bold" fill="#222" text-anchor="middle">ввод 2</text>
<text x="261.80" y="744.20" font-size="6.66" font-weight="bold" fill="#222" text-anchor="middle">Предыдущее</text>
<text x="261.80" y="751.40" font-size="6.66" font-weight="bold" fill="#222" text-anchor="middle">значение</text>
<text x="313.30" y="744.20" font-size="6.66" font-weight="bold" fill="#222" text-anchor="middle">Текущее</text>
<text x="313.30" y="751.40" font-size="6.66" font-weight="bold" fill="#222" text-anchor="middle">значение</text>
<text x="364.30" y="744.20" font-size="6.66" font-weight="bold" fill="#222" text-anchor="middle">Потребление,</text>
<text x="364.30" y="751.40" font-size="6.66" font-weight="bold" fill="#222" text-anchor="middle">МВт/ч</text>
<text x="415.80" y="744.20" font-size="6.66" font-weight="bold" fill="#222" text-anchor="middle">Предыдущее</text>
<text x="415.80" y="751.40" font-size="6.66" font-weight="bold" fill="#222" text-anchor="middle">значение</text>
<text x="467.30" y="744.20" font-size="6.66" font-weight="bold" fill="#222" text-anchor="middle">Текущее</text>
<text x="467.30" y="751.40" font-size="6.66" font-weight="bold" fill="#222" text-anchor="middle">значение</text>
<text x="518.30" y="744.20" font-size="6.66" font-weight="bold" fill="#222" text-anchor="middle">Потребление,</text>
<text x="518.30" y="751.40" font-size="6.66" font-weight="bold" fill="#222" text-anchor="middle">МВт/ч</text>
<text x="569.80" y="744.20" font-size="6.66" font-weight="bold" fill="#222" text-anchor="middle">Предыдущее</text>
<text x="569.80" y="751.40" font-size="6.66" font-weight="bold" fill="#222" text-anchor="middle">значение</text>
<text x="621.30" y="744.20" font-size="6.66" font-weight="bold" fill="#222" text-anchor="middle">Текущее</text>
<text x="621.30" y="751.40" font-size="6.66" font-weight="bold" fill="#222" text-anchor="middle">значение</text>
<text x="672.30" y="744.20" font-size="6.66" font-weight="bold" fill="#222" text-anchor="middle">Потребление,</text>
<text x="672.30" y="751.40" font-size="6.66" font-weight="bold" fill="#222" text-anchor="middle">МВт/ч</text>
<text x="723.80" y="744.20" font-size="6.66" font-weight="bold" fill="#222" text-anchor="middle">Предыдущее</text>
<text x="723.80" y="751.40" font-size="6.66" font-weight="bold" fill="#222" text-anchor="middle">значение</text>
<text x="775.30" y="744.20" font-size="6.66" font-weight="bold" fill="#222" text-anchor="middle">Текущее</text>
<text x="775.30" y="751.40" font-size="6.66" font-weight="bold" fill="#222" text-anchor="middle">значение</text>
<text x="826.80" y="744.20" font-size="6.66" font-weight="bold" fill="#222" text-anchor="middle">Потребление,</text>
<text x="826.80" y="751.40" font-size="6.66" font-weight="bold" fill="#222" text-anchor="middle">МВт/ч</text>
<text x="886.00" y="723.20" font-size="8.8" font-weight="bold" fill="#222" text-anchor="middle">Общее</text>
<text x="886.00" y="733.40" font-size="8.8" font-weight="bold" fill="#222" text-anchor="middle">потребление,</text>
<text x="886.00" y="743.60" font-size="8.8" font-weight="bold" fill="#222" text-anchor="middle">МВт/ч</text>
<text x="123.40" y="767.10" font-size="8.6"  fill="#222" text-anchor="start">1</text>
<text x="193.00" y="767.10" font-size="8.57"  fill="#222" text-anchor="middle">02.09.2024</text>
<text x="286.10" y="767.10" font-size="8.55"  fill="#222" text-anchor="end">12,4520</text>
<text x="337.10" y="767.10" font-size="8.55"  fill="#222" text-anchor="end">12,4560</text>
<text x="388.10" y="767.10" font-size="8.75" font-weight="bold" fill="#222" text-anchor="end">0,0040</text>
<text x="440.10" y="767.10" font-size="8.55"  fill="#222" text-anchor="end">0,8290</text>
<text x="491.10" y="767.10" font-size="8.55"  fill="#222" text-anchor="end">0,8300</text>
<text x="542.10" y="767.10" font-size="8.75" font-weight="bold" fill="#222" text-anchor="end">0,0010</text>
<text x="594.10" y="767.10" font-size="8.55"  fill="#222" text-anchor="end">8,0830</text>
<text x="645.10" y="767.10" font-size="8.55"  fill="#222" text-anchor="end">8,0830</text>
<text x="696.10" y="767.10" font-size="8.75" font-weight="bold" fill="#222" text-anchor="end">0,0000</text>
<text x="748.10" y="767.10" font-size="8.55"  fill="#222" text-anchor="end">11,5390</text>
<text x="799.10" y="767.10" font-size="8.55"  fill="#222" text-anchor="end">11,5390</text>
<text x="851.10" y="767.10" font-size="8.75" font-weight="bold" fill="#222" text-anchor="end">0,0000</text>
<text x="918.10" y="767.10" font-size="8.75" font-weight="bold" fill="#222" text-anchor="end">0,0050</text>
<text x="123.40" y="784.10" font-size="8.6"  fill="#222" text-anchor="start">2</text>
<text x="193.00" y="784.10" font-size="8.57"  fill="#222" text-anchor="middle">03.09.2024</text>
<text x="286.10" y="784.10" font-size="8.55"  fill="#222" text-anchor="end">12,4560</text>
<text x="337.10" y="784.10" font-size="8.55"  fill="#222" text-anchor="end">12,4610</text>
<text x="388.10" y="784.10" font-size="8.75" font-weight="bold" fill="#222" text-anchor="end">0,0050</text>
<text x="440.10" y="784.10" font-size="8.55"  fill="#222" text-anchor="end">0,8300</text>
<text x="491.10" y="784.10" font-size="8.55"  fill="#222" text-anchor="end">0,8300</text>
<text x="542.10" y="784.10" font-size="8.75" font-weight="bold" fill="#222" text-anchor="end">0,0000</text>
<text x="594.10" y="784.10" font-size="8.55"  fill="#222" text-anchor="end">8,0830</text>
<text x="645.10" y="784.10" font-size="8.55"  fill="#222" text-anchor="end">8,0830</text>
<text x="696.10" y="784.10" font-size="8.75" font-weight="bold" fill="#222" text-anchor="end">0,0000</text>
<text x="748.10" y="784.10" font-size="8.55"  fill="#222" text-anchor="end">11,5390</text>
<text x="799.10" y="784.10" font-size="8.55"  fill="#222" text-anchor="end">11,5390</text>
<text x="851.10" y="784.10" font-size="8.75" font-weight="bold" fill="#222" text-anchor="end">0,0000</text>
<text x="918.10" y="784.10" font-size="8.75" font-weight="bold" fill="#222" text-anchor="end">0,0050</text>
<text x="123.40" y="801.10" font-size="8.6"  fill="#222" text-anchor="start">3</text>
<text x="193.00" y="801.10" font-size="8.57"  fill="#222" text-anchor="middle">04.09.2024</text>
<text x="286.10" y="801.10" font-size="8.55"  fill="#222" text-anchor="end">12,4610</text>
<text x="337.10" y="801.10" font-size="8.55"  fill="#222" text-anchor="end">12,4660</text>
<text x="388.10" y="801.10" font-size="8.75" font-weight="bold" fill="#222" text-anchor="end">0,0050</text>
<text x="440.10" y="801.10" font-size="8.55"  fill="#222" text-anchor="end">0,8300</text>
<text x="491.10" y="801.10" font-size="8.55"  fill="#222" text-anchor="end">0,8300</text>
<text x="542.10" y="801.10" font-size="8.75" font-weight="bold" fill="#222" text-anchor="end">0,0000</text>
<text x="594.10" y="801.10" font-size="8.55"  fill="#222" text-anchor="end">8,0830</text>
<text x="645.10" y="801.10" font-size="8.55"  fill="#222" text-anchor="end">8,0830</text>
<text x="696.10" y="801.10" font-size="8.75" font-weight="bold" fill="#222" text-anchor="end">0,0000</text>
<text x="748.10" y="801.10" font-size="8.55"  fill="#222" text-anchor="end">11,5390</text>
<text x="799.10" y="801.10" font-size="8.55"  fill="#222" text-anchor="end">11,5390</text>
<text x="851.10" y="801.10" font-size="8.75" font-weight="bold" fill="#222" text-anchor="end">0,0000</text>
<text x="918.10" y="801.10" font-size="8.75" font-weight="bold" fill="#222" text-anchor="end">0,0050</text>
<text x="123.40" y="818.10" font-size="8.6"  fill="#222" text-anchor="start">4</text>
<text x="193.00" y="818.10" font-size="8.57"  fill="#222" text-anchor="middle">05.09.2024</text>
<text x="286.10" y="818.10" font-size="8.55"  fill="#222" text-anchor="end">12,4660</text>
<text x="337.10" y="818.10" font-size="8.55"  fill="#222" text-anchor="end">12,4720</text>
<text x="388.10" y="818.10" font-size="8.75" font-weight="bold" fill="#222" text-anchor="end">0,0060</text>
<text x="440.10" y="818.10" font-size="8.55"  fill="#222" text-anchor="end">0,8300</text>
<text x="491.10" y="818.10" font-size="8.55"  fill="#222" text-anchor="end">0,8310</text>
<text x="542.10" y="818.10" font-size="8.75" font-weight="bold" fill="#222" text-anchor="end">0,0010</text>
<text x="594.10" y="818.10" font-size="8.55"  fill="#222" text-anchor="end">8,0830</text>
<text x="645.10" y="818.10" font-size="8.55"  fill="#222" text-anchor="end">8,0830</text>
<text x="696.10" y="818.10" font-size="8.75" font-weight="bold" fill="#222" text-anchor="end">0,0000</text>
<text x="748.10" y="818.10" font-size="8.55"  fill="#222" text-anchor="end">11,5390</text>
<text x="799.10" y="818.10" font-size="8.55"  fill="#222" text-anchor="end">11,5390</text>
<text x="851.10" y="818.10" font-size="8.75" font-weight="bold" fill="#222" text-anchor="end">0,0000</text>
<text x="918.10" y="818.10" font-size="8.75" font-weight="bold" fill="#222" text-anchor="end">0,0070</text>
<text x="918.50" y="845.80" font-size="8.2"  fill="#333" text-anchor="middle">1</text></svg>
</body></html>
